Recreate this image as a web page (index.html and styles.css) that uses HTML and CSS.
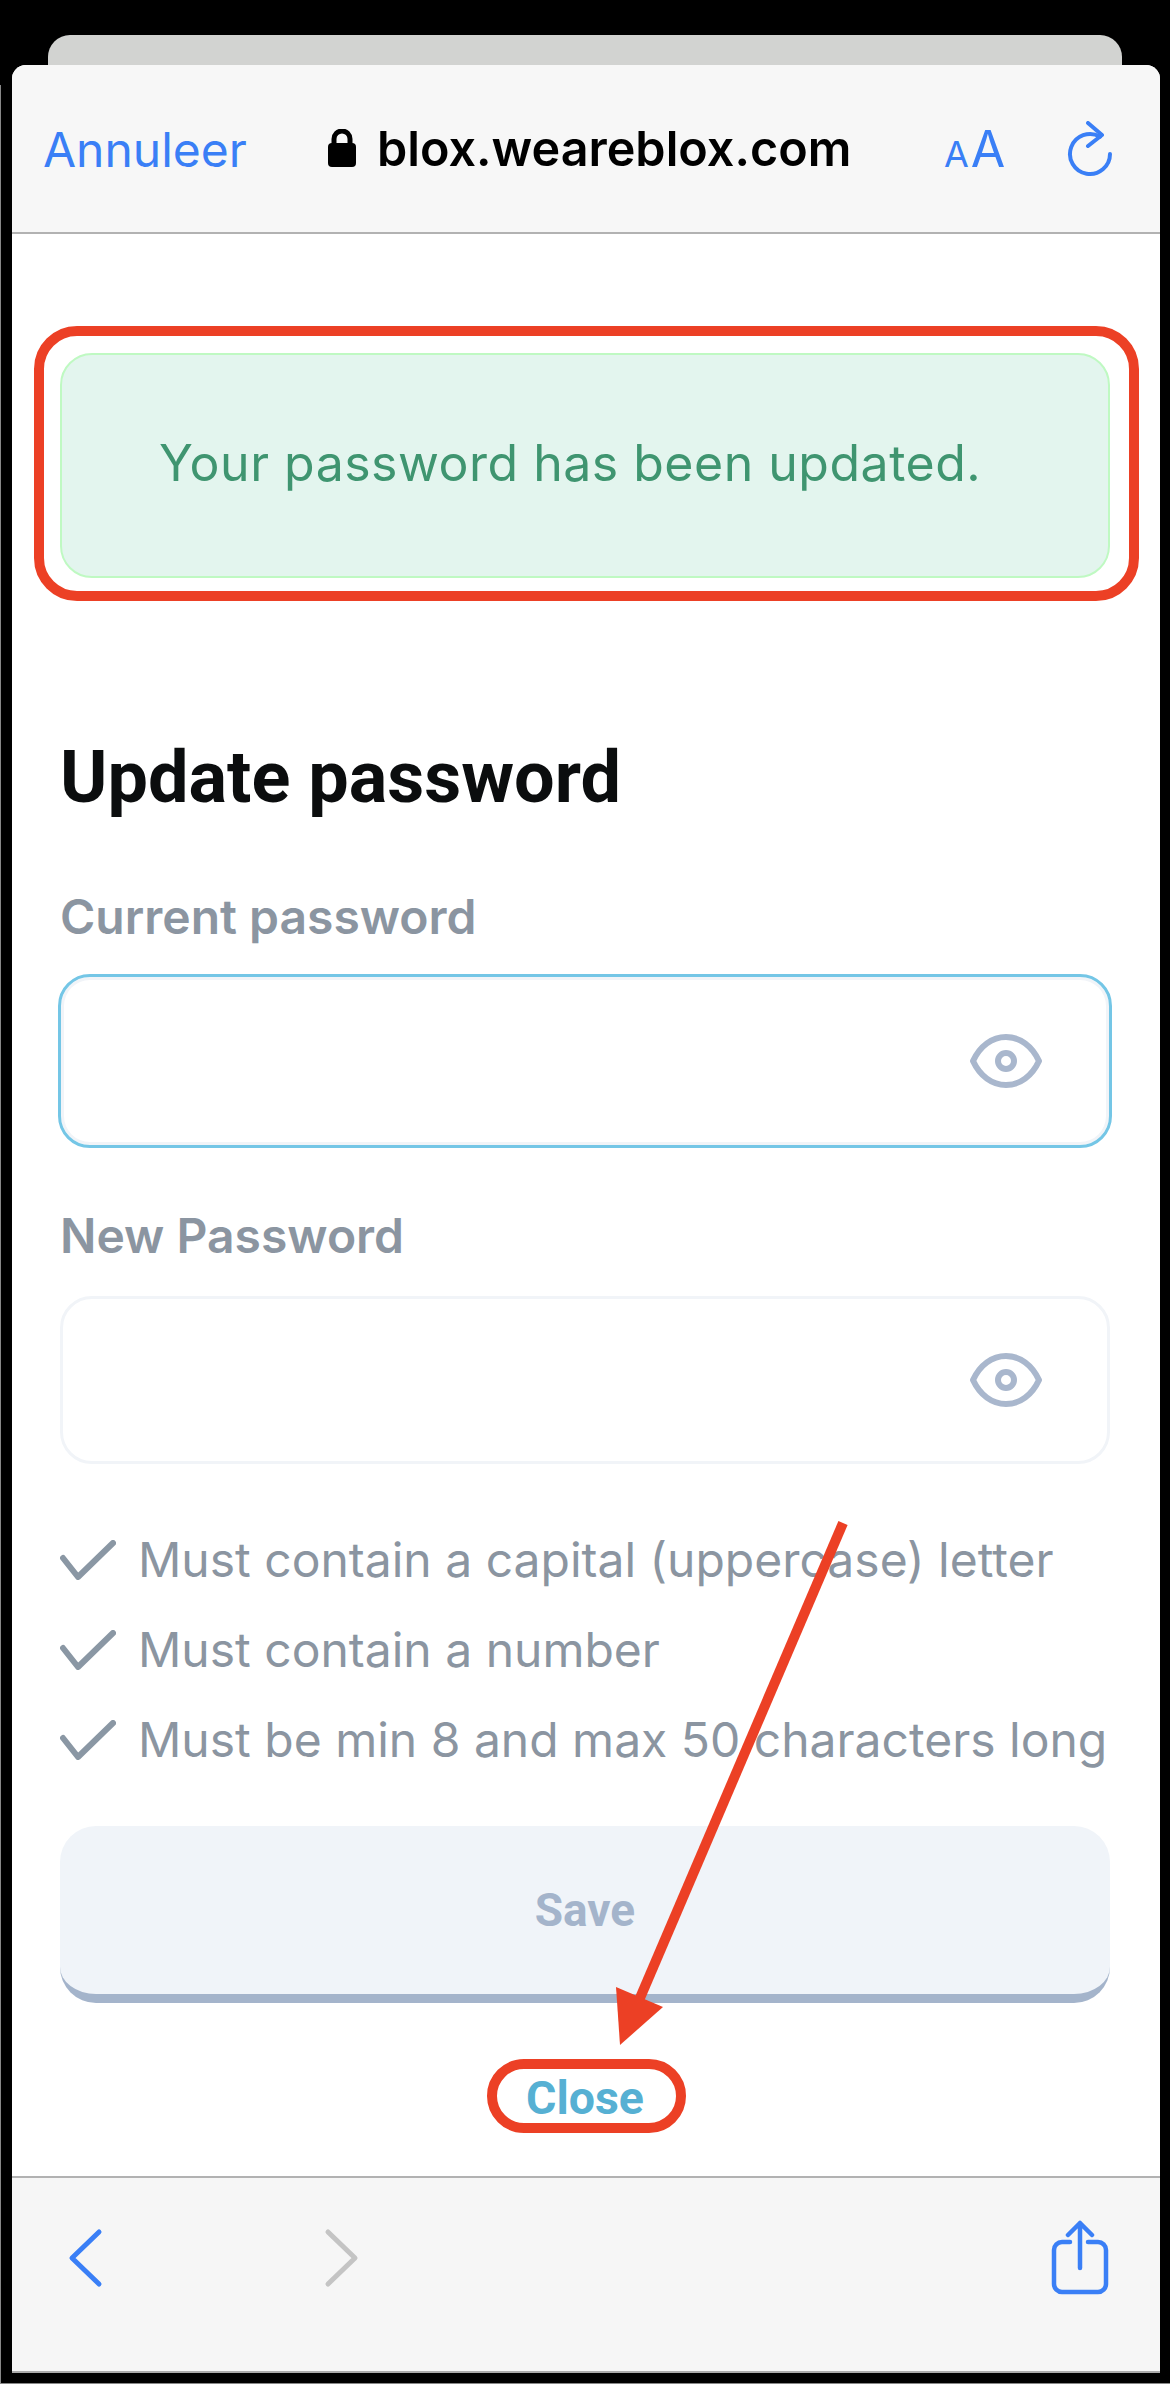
FILE: index.html
```html
<!DOCTYPE html>
<html lang="en">
<head>
<meta charset="utf-8">
<title>Update password</title>
<link rel="stylesheet" href="styles.css">
</head>
<body>
<div class="frame">
  <div class="back-tab"></div>
  <div class="sheet">
    <header class="topbar">
      <span class="cancel">Annuleer</span>
      <span class="address">
        <svg class="lock" width="28" height="38" viewBox="0 0 28 38"><path class="lock-shackle" d="M6 17V10a8 8 0 0 1 16 0v7"/><rect class="lock-body" x="0" y="14" width="28" height="24" rx="4"/></svg>
        <span class="url">blox.weareblox.com</span>
      </span>
      <span class="text-size"><span class="text-size-small">A</span><span class="text-size-big">A</span></span>
      <svg class="reload" width="50" height="56" viewBox="0 0 50 56"><path d="M43 33A20 20 0 1 1 33 15.700"/><path d="M21 2l14 12-14 11"/></svg>
    </header>

    <main class="content">
      <div class="banner">Your password has been updated.</div>
      <h1 class="title">Update password</h1>

      <label class="label">Current password</label>
      <div class="field field-focus">
        <svg class="eye" width="72" height="54" viewBox="0 0 72 54"><path d="M3 27C10 12 22 3 36 3S62 12 69 27C62 42 50 51 36 51S10 42 3 27Z"/><circle cx="36" cy="27" r="8"/></svg>
      </div>

      <label class="label label-new">New Password</label>
      <div class="field">
        <svg class="eye" width="72" height="54" viewBox="0 0 72 54"><path d="M3 27C10 12 22 3 36 3S62 12 69 27C62 42 50 51 36 51S10 42 3 27Z"/><circle cx="36" cy="27" r="8"/></svg>
      </div>

      <ul class="rules">
        <li class="rule"><svg class="check" width="56" height="40" viewBox="0 0 56 40"><path d="M3 18l15 19L53 3"/></svg>Must contain a capital (uppercase) letter</li>
        <li class="rule"><svg class="check" width="56" height="40" viewBox="0 0 56 40"><path d="M3 18l15 19L53 3"/></svg>Must contain a number</li>
        <li class="rule"><svg class="check" width="56" height="40" viewBox="0 0 56 40"><path d="M3 18l15 19L53 3"/></svg>Must be min 8 and max 50 characters long</li>
      </ul>

      <button class="save" type="button">Save</button>
      <div class="close">Close</div>
    </main>

    <footer class="toolbar">
      <div class="nav">
        <svg class="chev chev-on" width="36" height="60" viewBox="0 0 36 60"><path d="M31 4L4 30l27 26"/></svg>
        <svg class="chev chev-off" width="36" height="60" viewBox="0 0 36 60"><path d="M5 4l27 26L5 56"/></svg>
      </div>
      <svg class="share" width="60" height="76" viewBox="0 0 60 76"><path d="M20 22H12a8 8 0 0 0-8 8v34a8 8 0 0 0 8 8h36a8 8 0 0 0 8-8V30a8 8 0 0 0-8-8H38"/><path d="M30 48V3M18 15L30 3l12 12"/></svg>
    </footer>
  </div>

  <svg class="annotations" width="1170" height="2384" viewBox="0 0 1170 2384">
    <rect class="mark" x="39" y="331" width="1095" height="265" rx="38"/>
    <rect class="mark" x="492" y="2064" width="189" height="64" rx="32"/>
    <path class="mark" d="M843 1523L640 1998"/>
    <polygon class="mark-fill" points="620,2045 616,1987 663,2007"/>
  </svg>
</div>
</body>
</html>
```
FILE: styles.css
```css
* { box-sizing: border-box; }
html, body { margin: 0; padding: 0; background: #000; }
.frame {
  position: relative;
  width: 1170px;
  height: 2384px;
  background: #000;
  padding: 35px 10px 11px 12px;
  display: flex;
  flex-direction: column;
  font-family: "Inter", "Liberation Sans", sans-serif;
  overflow: hidden;
}
.frame::before {
  content: "";
  position: absolute;
  left: 0;
  top: 85px;
  bottom: 0;
  width: 1px;
  background: #888;
}
.frame::after {
  content: "";
  position: absolute;
  left: 0;
  right: 0;
  bottom: 0;
  height: 1px;
  background: #888;
}
.back-tab {
  width: 1074px;
  height: 30px;
  margin-left: 36px;
  background: #d2d3d1;
  border-radius: 22px 22px 0 0;
  flex: none;
}
.sheet {
  flex: 1;
  background: #fff;
  border-radius: 14px 14px 0 0;
  overflow: hidden;
  display: flex;
  flex-direction: column;
}
.topbar {
  flex: none;
  height: 169px;
  background: #f7f7f7;
  border-bottom: 2px solid #b2b2b2;
  display: flex;
  align-items: center;
  padding: 0 0 0 31px;
}
.cancel {
  width: 285px;
  font-size: 48px;
  color: #3a7ff6;
  position: relative;
  top: 1px;
}
.address {
  display: flex;
  align-items: center;
  width: 616px;
}
.lock { flex: none; margin-top: -2px; }
.lock-shackle { fill: none; stroke: #000; stroke-width: 5; }
.lock-body { fill: #000; }
.url {
  margin-left: 21px;
  font-size: 48.500px;
  font-weight: 600;
  color: #000;
  white-space: nowrap;
}
.text-size {
  width: 123px;
  color: #3a7ff6;
  line-height: 1;
  white-space: nowrap;
}
.text-size-small { font-size: 36px; margin-right: 2px; }
.text-size-big { font-size: 50px; }
.reload { flex: none; }
.reload path { fill: none; stroke: #3a7ff6; stroke-width: 4; stroke-linecap: round; stroke-linejoin: round; }

.content {
  flex: 1;
  padding: 119px 50px 0 48px;
  display: flex;
  flex-direction: column;
  background: #fff;
}
.banner {
  height: 225px;
  background: #e3f5ee;
  border: 2px solid #bff9c2;
  border-radius: 32px;
  display: flex;
  align-items: center;
  padding: 0 0 6px 97px;
  font-size: 50px;
  letter-spacing: 0.500px;
  color: #3f9570;
}
.title {
  margin: 158px 0 0;
  font-family: "Roboto", sans-serif;
  font-size: 72px;
  line-height: 84px;
  font-weight: 700;
  color: #0b0d0e;
}
.label {
  display: block;
  margin-top: 69px;
  font-size: 48px;
  line-height: 56px;
  font-weight: 600;
  color: #8b95a1;
}
.label-new { margin-top: 60px; }
.field {
  margin-top: 32px;
  height: 168px;
  background: #fff;
  border: 3px solid #f1f4f8;
  border-radius: 32px;
  display: flex;
  align-items: center;
  justify-content: flex-end;
  padding-right: 65px;
}
.field-focus {
  margin: 29px -2px 0;
  height: 174px;
  border-color: #74c6e6;
  padding-right: 67px;
  box-shadow: inset 0 0 0 3px #f1f4f8;
}
.eye path, .eye circle { fill: none; stroke: #a9b7cd; stroke-width: 6; stroke-linejoin: round; }
.rules {
  list-style: none;
  margin: 68px 0 0;
  padding: 0;
  display: flex;
  flex-direction: column;
  gap: 34px;
}
.rule {
  display: flex;
  align-items: center;
  height: 56px;
  font-size: 48px;
  line-height: 56px;
  color: #8b95a1;
  white-space: nowrap;
}
.check { flex: none; margin-right: 22px; }
.check path { fill: none; stroke: #8a97a4; stroke-width: 6; stroke-linecap: round; stroke-linejoin: round; }
.save {
  margin-top: 58px;
  height: 177px;
  border: 0;
  border-bottom: 9px solid #a4b4cb;
  border-radius: 36px;
  background: #f0f4f9;
  font-family: "Roboto", sans-serif;
  font-size: 46px;
  font-weight: 700;
  color: #a4b4cb;
}
.close {
  margin-top: 65px;
  text-align: center;
  font-family: "Roboto", sans-serif;
  font-size: 46.500px;
  line-height: 60px;
  font-weight: 700;
  color: #56b0d3;
}
.toolbar {
  flex: none;
  height: 197px;
  background: #f6f6f6;
  border-top: 2px solid #b2b2b2;
  border-bottom: 2px solid #aaa;
  display: flex;
  align-items: center;
  justify-content: space-between;
  padding: 0 50px 34px 56px;
}
.nav { display: flex; gap: 219px; }
.chev path { fill: none; stroke-width: 5; stroke-linecap: round; stroke-linejoin: round; }
.chev-on path { stroke: #3a7ff6; }
.chev-off path { stroke: #c4c4c4; }
.share path { fill: none; stroke: #3a7ff6; stroke-width: 4.500; stroke-linecap: round; stroke-linejoin: round; }

.annotations { position: absolute; left: 0; top: 0; pointer-events: none; }
.mark { fill: none; stroke: #ec4025; stroke-width: 10; }
.mark-fill { fill: #ec4025; }
```
